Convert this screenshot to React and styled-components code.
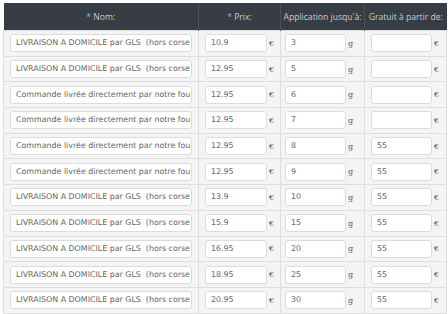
import React from "react";
import styled, { createGlobalStyle } from "styled-components";

const Global = createGlobalStyle`
  html, body { margin: 0; padding: 0; background: #ffffff; }
  body { font-family: "Open Sans", "DejaVu Sans", sans-serif; }
`;

const Wrap = styled.div`
  padding: 3px 0 0 3px;
  width: 448px;
  height: 314px;
  box-sizing: border-box;
  overflow: hidden;
`;

const Table = styled.table`
  border-collapse: collapse;
  table-layout: fixed;
  width: 443px;
`;

const Th = styled.th`
  background: #363d44;
  color: #c9cdd1;
  font-weight: 400;
  font-size: 8.6px;
  height: 27px;
  padding: 0;
  text-align: center;
  border-left: 1px solid #4b535a;
  &:first-child { border-left: none; }
  white-space: nowrap;
  overflow: hidden;
`;

const Star = styled.span`
  color: #8fb3cf;
`;

const Td = styled.td`
  background: #f4f4f4;
  border: 1px solid #dedede;
  height: 24.7px;
  padding: 0 0 0 ${(p) => p.$pl || 6}px;
  vertical-align: middle;
`;

const Cell = styled.div`
  display: flex;
  align-items: center;
  gap: 2px;
`;

const Input = styled.div`
  box-sizing: border-box;
  width: ${(p) => p.$w}px;
  height: 18px;
  background: #fff;
  border: 1px solid #dcdcdc;
  border-radius: 3px;
  padding: 0 5px;
  font-family: "DejaVu Sans", sans-serif;
  font-size: 7.9px;
  color: #666;
  line-height: 16px;
  white-space: pre;
  overflow: hidden;
`;

const Unit = styled.span`
  font-family: "DejaVu Serif", serif;
  font-size: 8px;
  color: #555;
`;

const rows = [
  ["LIVRAISON A DOMICILE par GLS  (hors corse", "10.9", "3", ""],
  ["LIVRAISON A DOMICILE par GLS  (hors corse", "12.95", "5", ""],
  ["Commande livrée directement par notre fournisseur", "12.95", "6", ""],
  ["Commande livrée directement par notre fournisseur", "12.95", "7", ""],
  ["Commande livrée directement par notre fournisseur", "12.95", "8", "55"],
  ["Commande livrée directement par notre fournisseur", "12.95", "9", "55"],
  ["LIVRAISON A DOMICILE par GLS  (hors corse", "13.9", "10", "55"],
  ["LIVRAISON A DOMICILE par GLS  (hors corse", "15.9", "15", "55"],
  ["LIVRAISON A DOMICILE par GLS  (hors corse", "16.95", "20", "55"],
  ["LIVRAISON A DOMICILE par GLS  (hors corse", "18.95", "25", "55"],
  ["LIVRAISON A DOMICILE par GLS  (hors corse", "20.95", "30", "55"],
];

export default function App() {
  return (
    <>
      <Global />
      <Wrap>
        <Table>
          <colgroup>
            <col style={{ width: 195 }} />
            <col style={{ width: 82 }} />
            <col style={{ width: 84 }} />
            <col style={{ width: 82 }} />
          </colgroup>
          <thead>
            <tr>
              <Th><Star>*</Star> Nom:</Th>
              <Th><Star>*</Star> Prix:</Th>
              <Th>Application jusqu'à:</Th>
              <Th>Gratuit à partir de:</Th>
            </tr>
          </thead>
          <tbody>
            {rows.map((r, i) => (
              <tr key={i}>
                <Td $pl={6}>
                  <Cell><Input $w={182}>{r[0]}</Input></Cell>
                </Td>
                <Td $pl={6}>
                  <Cell><Input $w={62}>{r[1]}</Input><Unit>€</Unit></Cell>
                </Td>
                <Td $pl={4}>
                  <Cell><Input $w={61}>{r[2]}</Input><Unit>g</Unit></Cell>
                </Td>
                <Td $pl={6}>
                  <Cell><Input $w={61}>{r[3]}</Input><Unit>€</Unit></Cell>
                </Td>
              </tr>
            ))}
          </tbody>
        </Table>
      </Wrap>
    </>
  );
}
